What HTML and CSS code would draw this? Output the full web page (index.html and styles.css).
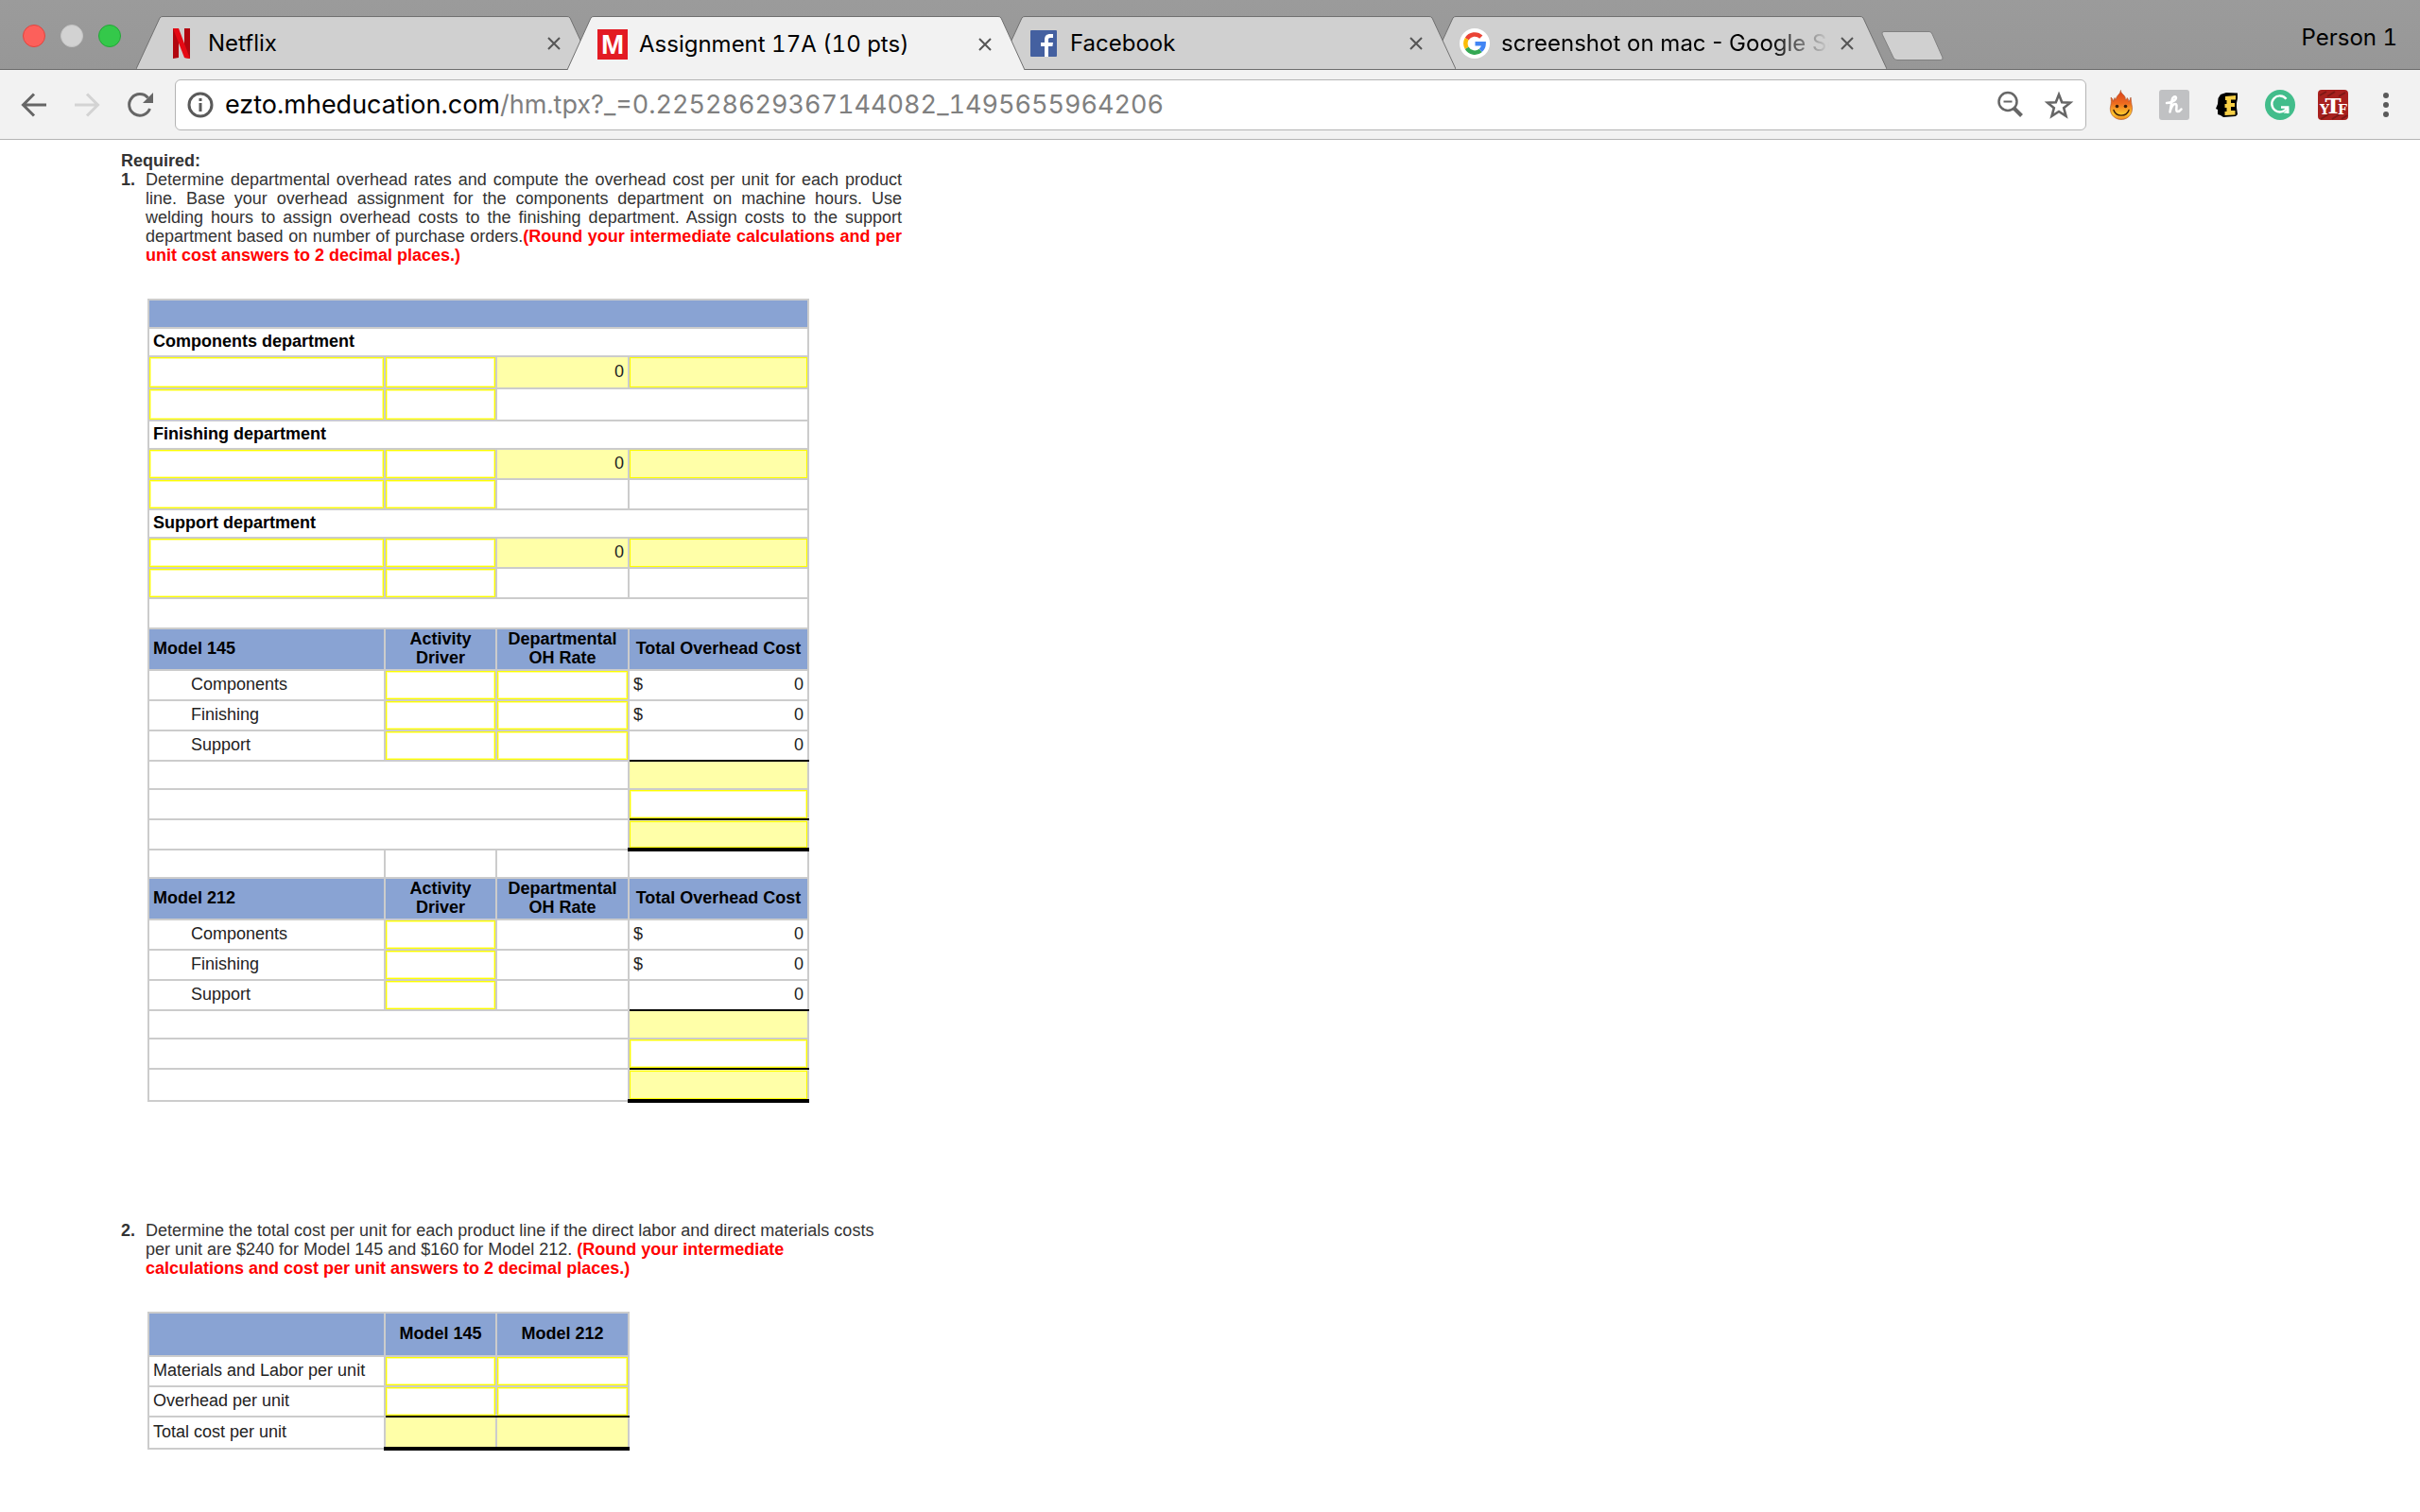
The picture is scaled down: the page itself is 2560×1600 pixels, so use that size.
FILE: index.html
```html
<!DOCTYPE html>
<html lang="en">

<head>
    <meta charset="UTF-8">
    <meta name="viewport" content="width=device-width, initial-scale=1.0">
    <title>Assignment 17A (10 pts)</title>
    <link rel="stylesheet" href="styles.css">
</head>

<body>

    <header class="browser">
        <div class="tab-strip">
            <div class="window-buttons">
                <button class="light red" aria-label="Close window"></button>
                <button class="light grey" aria-label="Minimize window"></button>
                <button class="light green" aria-label="Zoom window"></button>
            </div>
            <nav class="tabs">
                <div class="tab tab-1">
                    <svg class="tab-shape" viewBox="0 0 484 57" preserveAspectRatio="none">
                        <path d="M0 57L25 2Q26 .5 28 .5H456Q458 .5 459 2L484 57" />
                    </svg>
                    <svg class="favicon" viewBox="0 0 32 32">
                        <path fill="#b1060f" d="M7 0h6v31l-6 1zM19 0h6v32l-6-1z" />
                        <path fill="#e50914" d="M7 0h6l12 32-6-1z" />
                    </svg>
                    <a class="tab-title" href="#">Netflix</a>
                    <button class="tab-close" aria-label="Close tab"><svg viewBox="0 0 14 14"><path d="M1 1l12 12M13 1L1 13" /></svg></button>
                </div>
                <div class="tab tab-2 active">
                    <svg class="tab-shape" viewBox="0 0 484 57" preserveAspectRatio="none">
                        <path d="M0 57L25 2Q26 .5 28 .5H456Q458 .5 459 2L484 57" />
                    </svg>
                    <svg class="favicon" viewBox="0 0 32 32">
                        <rect width="32" height="32" fill="#e31b23" />
                        <text class="logo-m" x="16" y="26" text-anchor="middle">M</text>
                    </svg>
                    <a class="tab-title" href="#">Assignment 17A (10 pts)</a>
                    <button class="tab-close" aria-label="Close tab"><svg viewBox="0 0 14 14"><path d="M1 1l12 12M13 1L1 13" /></svg></button>
                </div>
                <div class="tab tab-3">
                    <svg class="tab-shape" viewBox="0 0 484 57" preserveAspectRatio="none">
                        <path d="M0 57L25 2Q26 .5 28 .5H456Q458 .5 459 2L484 57" />
                    </svg>
                    <svg class="favicon" viewBox="0 0 32 32">
                        <rect x="2" y="2" width="28" height="28" rx="1" fill="#4460a0" />
                        <path fill="#fff" d="M17 30V19h-4v-4h4v-3c0-4 2-6 6-6h3v4h-3c-1.500 0-2 .7-2 2v3h5l-.6 4H21v11z" />
                    </svg>
                    <a class="tab-title" href="#">Facebook</a>
                    <button class="tab-close" aria-label="Close tab"><svg viewBox="0 0 14 14"><path d="M1 1l12 12M13 1L1 13" /></svg></button>
                </div>
                <div class="tab tab-4">
                    <svg class="tab-shape" viewBox="0 0 484 57" preserveAspectRatio="none">
                        <path d="M0 57L25 2Q26 .5 28 .5H456Q458 .5 459 2L484 57" />
                    </svg>
                    <svg class="favicon" viewBox="0 0 32 32">
                        <circle cx="16" cy="16" r="16" fill="#fff" />
                        <g fill="none" stroke-width="4.500">
                            <path stroke="#ea4335" d="M7.700 11.200A9.600 9.600 0 0 1 22.800 9.200" />
                            <path stroke="#fbbc05" d="M7.700 20.800A9.600 9.600 0 0 1 7.700 11.200" />
                            <path stroke="#34a853" d="M22.200 23.400A9.600 9.600 0 0 1 7.700 20.800" />
                            <path stroke="#4285f4" d="M16.500 16.200H25.600A9.600 9.600 0 0 1 22.200 23.400" />
                        </g>
                    </svg>
                    <a class="tab-title fade" href="#">screenshot on mac - Google Search</a>
                    <button class="tab-close" aria-label="Close tab"><svg viewBox="0 0 14 14"><path d="M1 1l12 12M13 1L1 13" /></svg></button>
                </div>
            </nav>
            <button class="new-tab" aria-label="New tab">
                <svg viewBox="0 0 66 32">
                    <path d="M3 .5H51Q53 .5 54 3L65 28Q65.500 30.500 63 30.500H17Q14 30.500 13 28L1 3Q.5 .5 3 .5z" />
                </svg>
            </button>
            <button class="profile">Person 1</button>
        </div>

        <div class="toolbar">
            <button class="tool" aria-label="Back">
                <svg viewBox="0 0 32 32"><path class="line" d="M29 16H5M16 4.500L4.500 16L16 27.500" /></svg>
            </button>
            <button class="tool disabled" aria-label="Forward">
                <svg viewBox="0 0 32 32"><path class="line" d="M3 16H27M16 4.500L27.500 16L16 27.500" /></svg>
            </button>
            <button class="tool" aria-label="Reload">
                <svg viewBox="0 0 32 32">
                    <path class="line" d="M26.500 20A11.300 11.300 0 1 1 24.500 8.500" />
                    <path fill="#666" d="M30 3v11H19z" />
                </svg>
            </button>
            <div class="omnibox">
                <svg class="info" viewBox="0 0 28 28">
                    <circle cx="14" cy="14" r="12" fill="none" stroke="#5a5a5a" stroke-width="3" />
                    <path fill="#5a5a5a" d="M12.500 7h3v3h-3zM12.500 12h3v9h-3z" />
                </svg>
                <a class="url" href="#">ezto.mheducation.com<span>/hm.tpx?_=0.22528629367144082_1495655964206</span></a>
                <button class="omni-button" aria-label="Zoom">
                    <svg viewBox="0 0 32 32">
                        <circle cx="14" cy="12.500" r="9.500" fill="none" stroke="#666" stroke-width="2.500" />
                        <path fill="none" stroke="#666" stroke-width="2" d="M9.500 12.500h9" />
                        <path fill="none" stroke="#666" stroke-width="4" d="M20.500 19.500l8 8" />
                    </svg>
                </button>
                <button class="omni-button" aria-label="Bookmark this page">
                    <svg viewBox="0 0 32 32">
                        <path fill="none" stroke="#666" stroke-width="2.600" d="M16 5l3.200 8.200 8.800.5-6.800 5.600 2.300 8.500L16 23l-7.500 4.800 2.300-8.500L4 13.700l8.800-.5z" />
                    </svg>
                </button>
            </div>
            <button class="tool" aria-label="Hola">
                <svg viewBox="0 0 32 32">
                    <defs>
                        <linearGradient id="flame" x1="0" y1="0" x2="0" y2="1">
                            <stop offset="0" stop-color="#d8401c" />
                            <stop offset=".45" stop-color="#ee6b1f" />
                            <stop offset=".8" stop-color="#fdc52c" />
                            <stop offset="1" stop-color="#f08a20" />
                        </linearGradient>
                    </defs>
                    <path fill="url(#flame)" stroke="#a8502a" stroke-width=".6" d="M15.500.5c-.3 2 1 3 3 5 1.500 1.500 2 3 1.800 5 1 0 1.700-.7 2-2 1.200 1.700 1.500 2.500 1.300 4 1.300-1 1.800-2.500 2.400-4.500.7 3 .2 5 1 7.500 2.500 8.500-3 16-11 16s-13.500-7-11.200-15C5.500 13.500 5.500 12 5 8c1.500 1 2 2.500 2.700 4.500.2-1.500.3-2.500 1.300-4 .5 1 .7 1.500 1.300 2C10.500 6 15 5 15.500.5z" />
                    <circle cx="11.500" cy="17.500" r="1.800" fill="#3a1d08" />
                    <circle cx="20.500" cy="17.500" r="1.800" fill="#3a1d08" />
                    <path fill="none" stroke="#3a1d08" stroke-width="1.400" stroke-linecap="round" d="M8 21.500c2 7.500 14 7.500 16 0" />
                </svg>
            </button>
            <button class="tool" aria-label="Honey">
                <svg viewBox="0 0 32 32">
                    <rect width="32" height="32" rx="3" fill="#c0c1c3" />
                    <path fill="none" stroke="#fff" stroke-width="2.500" stroke-linecap="round" stroke-linejoin="round" d="M8 14c5 0 10-3 10-5.500C18 6 14 7 13.500 12L11.500 23.500C13 18 15 15 17 15c3.500 0-.5 8 2.500 8 2 0 3-1 4-2.500" />
                </svg>
            </button>
            <button class="tool" aria-label="Ebates">
                <svg viewBox="0 0 32 32">
                    <path d="M9 5l6-2 12 .5V9l-1 5v5l1 7-2 2-13 1-3-2-3-1V21l-2-1 2-5 .5-6z" />
                    <path fill="#f7cf46" d="M14 7l11-1v4.500h-5v3.500h4v4h-4v4h4.500v4.500l-11 .5V23h2v-4h-2v-4h2v-4h-1.500z" />
                </svg>
            </button>
            <button class="tool" aria-label="Grammarly">
                <svg viewBox="0 0 32 32">
                    <circle cx="16" cy="16" r="16" fill="#42bd8b" />
                    <path fill="none" stroke="#fff" stroke-width="2.400" d="M22.500 9.700A8.500 8.500 0 1 0 23.500 18.500M17 18.500h7.200V25" />
                    <path fill="#fff" d="M19.500 24.800l5.700-5v5z" />
                </svg>
            </button>
            <button class="tool" aria-label="YTF">
                <svg viewBox="0 0 32 32">
                    <rect width="32" height="32" rx="4" fill="#a8201e" />
                    <path fill="none" stroke="#7d1815" stroke-width="2" d="M2 6l7-4M10 7l8-5M22 7l7-4M3 31l8-5M15 31l8-5M25 31l6-4" />
                    <text class="logo-ytf" x="7" y="26" text-anchor="middle">Y</text>
                    <text class="logo-ytf big" x="16" y="25" text-anchor="middle">T</text>
                    <text class="logo-ytf" x="26" y="26" text-anchor="middle">F</text>
                </svg>
            </button>
            <button class="tool" aria-label="Menu">
                <svg viewBox="0 0 32 32" fill="#5a5a5a">
                    <circle cx="16" cy="6" r="3" />
                    <circle cx="16" cy="16" r="3" />
                    <circle cx="16" cy="26" r="3" />
                </svg>
            </button>
        </div>
    </header>

    <main class="page">
        <h1 class="required">Required:</h1>
        <div class="question">
            <b class="number">1.</b>
            <p class="justified">Determine departmental overhead rates and compute the overhead cost per unit for each product line. Base your overhead assignment for the components department on machine hours. Use welding hours to assign overhead costs to the finishing department. Assign costs to the support department based on number of purchase orders.<b class="hint">(Round your intermediate calculations and per unit cost answers to 2 decimal places.)</b></p>
        </div>

        <table class="sheet sheet-overhead">
            <colgroup>
                <col class="col-label">
                <col class="col-driver">
                <col class="col-rate">
                <col class="col-total">
            </colgroup>
            <tbody>
                <tr class="row-short blue"><td colspan="4"></td></tr>

                <tr class="row-short"><th colspan="4">Components department</th></tr>
                <tr class="row-tall">
                    <td><input type="text" aria-label="Components cost"></td>
                    <td><input type="text" aria-label="Components cost amount"></td>
                    <td class="yellow num">0</td>
                    <td><input type="text" class="result" aria-label="Components rate unit" readonly></td>
                </tr>
                <tr class="row-tall">
                    <td><input type="text" aria-label="Components driver"></td>
                    <td><input type="text" aria-label="Components driver amount"></td>
                    <td colspan="2"></td>
                </tr>

                <tr class="row-short"><th colspan="4">Finishing department</th></tr>
                <tr>
                    <td><input type="text" aria-label="Finishing cost"></td>
                    <td><input type="text" aria-label="Finishing cost amount"></td>
                    <td class="yellow num">0</td>
                    <td><input type="text" class="result" aria-label="Finishing rate unit" readonly></td>
                </tr>
                <tr>
                    <td><input type="text" aria-label="Finishing driver"></td>
                    <td><input type="text" aria-label="Finishing driver amount"></td>
                    <td></td>
                    <td></td>
                </tr>

                <tr class="row-short"><th colspan="4">Support department</th></tr>
                <tr>
                    <td><input type="text" aria-label="Support cost"></td>
                    <td><input type="text" aria-label="Support cost amount"></td>
                    <td class="yellow num">0</td>
                    <td><input type="text" class="result" aria-label="Support rate unit" readonly></td>
                </tr>
                <tr>
                    <td><input type="text" aria-label="Support driver"></td>
                    <td><input type="text" aria-label="Support driver amount"></td>
                    <td></td>
                    <td></td>
                </tr>
                <tr><td colspan="4"></td></tr>

                <!-- Model 145 -->
                <tr class="row-head blue">
                    <th>Model 145</th>
                    <th class="center">Activity Driver</th>
                    <th class="center">Departmental OH Rate</th>
                    <th class="center">Total Overhead Cost</th>
                </tr>
                <tr>
                    <td class="indent">Components</td>
                    <td><input type="text" aria-label="Model 145 components driver"></td>
                    <td><input type="text" aria-label="Model 145 components rate"></td>
                    <td><div class="money"><span>$</span><span>0</span></div></td>
                </tr>
                <tr>
                    <td class="indent">Finishing</td>
                    <td><input type="text" aria-label="Model 145 finishing driver"></td>
                    <td><input type="text" aria-label="Model 145 finishing rate"></td>
                    <td><div class="money"><span>$</span><span>0</span></div></td>
                </tr>
                <tr>
                    <td class="indent">Support</td>
                    <td><input type="text" aria-label="Model 145 support driver"></td>
                    <td><input type="text" aria-label="Model 145 support rate"></td>
                    <td class="num line-below">0</td>
                </tr>
                <tr class="row-short">
                    <td colspan="3"></td>
                    <td class="yellow"></td>
                </tr>
                <tr>
                    <td colspan="3"></td>
                    <td class="line-below"><input type="text" aria-label="Model 145 units"></td>
                </tr>
                <tr>
                    <td colspan="3"></td>
                    <td class="double-below yellow"><input type="text" class="result" aria-label="Model 145 overhead per unit" readonly></td>
                </tr>
                <tr class="row-short"><td></td><td></td><td></td><td></td></tr>

                <!-- Model 212 -->
                <tr class="row-head blue">
                    <th>Model 212</th>
                    <th class="center">Activity Driver</th>
                    <th class="center">Departmental OH Rate</th>
                    <th class="center">Total Overhead Cost</th>
                </tr>
                <tr>
                    <td class="indent">Components</td>
                    <td><input type="text" aria-label="Model 212 components driver"></td>
                    <td></td>
                    <td><div class="money"><span>$</span><span>0</span></div></td>
                </tr>
                <tr>
                    <td class="indent">Finishing</td>
                    <td><input type="text" aria-label="Model 212 finishing driver"></td>
                    <td></td>
                    <td><div class="money"><span>$</span><span>0</span></div></td>
                </tr>
                <tr>
                    <td class="indent">Support</td>
                    <td><input type="text" aria-label="Model 212 support driver"></td>
                    <td></td>
                    <td class="num line-below">0</td>
                </tr>
                <tr class="row-short">
                    <td colspan="3"></td>
                    <td class="yellow"></td>
                </tr>
                <tr>
                    <td colspan="3"></td>
                    <td class="line-below"><input type="text" aria-label="Model 212 units"></td>
                </tr>
                <tr class="row-tall">
                    <td colspan="3"></td>
                    <td class="double-below yellow"><input type="text" class="result" aria-label="Model 212 overhead per unit" readonly></td>
                </tr>
            </tbody>
        </table>

        <div class="question second">
            <b class="number">2.</b>
            <p>Determine the total cost per unit for each product line if the direct labor and direct materials costs per unit are $240 for Model 145 and $160 for Model 212. <b class="hint">(Round your intermediate calculations and cost per unit answers to 2 decimal places.)</b></p>
        </div>

        <table class="sheet sheet-cost">
            <colgroup>
                <col class="col-label">
                <col class="col-driver">
                <col class="col-rate">
            </colgroup>
            <thead>
                <tr class="row-head blue">
                    <td></td>
                    <th class="center">Model 145</th>
                    <th class="center">Model 212</th>
                </tr>
            </thead>
            <tbody>
                <tr>
                    <td>Materials and Labor per unit</td>
                    <td><input type="text" aria-label="Model 145 materials and labor"></td>
                    <td><input type="text" aria-label="Model 212 materials and labor"></td>
                </tr>
                <tr>
                    <td>Overhead per unit</td>
                    <td class="line-below"><input type="text" aria-label="Model 145 overhead"></td>
                    <td class="line-below"><input type="text" aria-label="Model 212 overhead"></td>
                </tr>
                <tr class="row-tall">
                    <td>Total cost per unit</td>
                    <td class="double-below yellow"></td>
                    <td class="double-below yellow"></td>
                </tr>
            </tbody>
        </table>
    </main>

</body>

</html>
```

FILE: styles.css
```css
* {
    box-sizing: border-box;
}

body {
    margin: 0;
    background: #fff;
    color: #333;
    font-family: "Liberation Sans", Arial, sans-serif;
    font-size: 18px;
    line-height: 20px;
}

button {
    padding: 0;
    border: none;
    background: none;
    color: inherit;
    font: inherit;
}

svg {
    display: block;
}

a {
    color: inherit;
    text-decoration: none;
}

/* Browser window */
.browser {
    font-family: Inter, Roboto, sans-serif;
    font-variant-numeric: tabular-nums;
    color: #000;
}

.tab-strip {
    display: flex;
    align-items: flex-end;
    height: 74px;
    padding: 0 24px;
    background: linear-gradient(#9b9b9b, #979797);
    box-shadow: inset 0 -1px #6b6b6b;
}

.window-buttons {
    display: flex;
    gap: 16px;
    padding-bottom: 24px;
    margin-right: 16px;
}

.light {
    width: 24px;
    height: 24px;
    border-radius: 50%;
    border: 1px solid #c4c4c4;
    background: #d2d2d2;
}

.light.red {
    background: #fc605b;
    border-color: #e0443e;
}

.light.green {
    background: #34c84a;
    border-color: #24a638;
}

.tabs {
    display: flex;
}

.tab {
    position: relative;
    display: flex;
    align-items: center;
    width: 484px;
    height: 57px;
    padding: 2px 35px 0 32px;
    margin-right: -28px;
    font-size: 24px;
    line-height: 32px;
}

.tab-shape {
    position: absolute;
    left: 0;
    top: 0;
    width: 100%;
    height: 100%;
    fill: #d0d0d0;
    stroke: #6f6f6f;
}

.tab:not(.active) {
    height: 56px;
    margin-bottom: 1px;
}

.tab-1 {
    z-index: 3;
}

.tab-2 {
    z-index: 4;
}

.tab-3 {
    z-index: 2;
}

.tab-4 {
    z-index: 1;
}

.active .tab-shape {
    fill: #f2f2f2;
}

.favicon {
    position: relative;
    width: 32px;
    height: 32px;
    margin-right: 12px;
}

.logo-m {
    fill: #fff;
    font: bold 29px "Liberation Sans", Arial, sans-serif;
}

.tab-title {
    position: relative;
    flex: 1;
    overflow: hidden;
    white-space: nowrap;
}

.tab-title.fade {
    font-variant-numeric: normal;
    -webkit-mask-image: linear-gradient(to right, #000 82%, transparent);
    mask-image: linear-gradient(to right, #000 82%, transparent);
}

.tab-close {
    position: relative;
    width: 14px;
    margin-left: 12px;
}

.tab-close path {
    fill: none;
    stroke: #555;
    stroke-width: 2;
}

.new-tab {
    width: 66px;
    margin: 0 0 9px 22px;
}

.new-tab path {
    fill: #d0d0d0;
    stroke: #808080;
}

.profile {
    margin: 0 0 18px auto;
    font-size: 24px;
    line-height: 32px;
}

.toolbar {
    display: flex;
    align-items: center;
    gap: 24px;
    height: 74px;
    padding: 0 20px;
    background: #f2f2f2;
    border-bottom: 1px solid #b4b4b4;
}

.tool {
    flex: none;
    width: 32px;
    height: 32px;
}

.line {
    fill: none;
    stroke: #666;
    stroke-width: 3;
}

.disabled .line {
    stroke: #d3d3d3;
}

.omnibox {
    flex: 1;
    display: flex;
    align-items: center;
    height: 54px;
    margin: 0 -3px;
    padding: 0 12px;
    border: 1px solid #b4b4b4;
    border-radius: 6px;
    background: #fff;
}

.info {
    width: 28px;
    height: 28px;
    margin-right: 12px;
}

.url {
    flex: 1;
    font-size: 27px;
    line-height: 36px;
}

.url span {
    color: #808080;
}

.omni-button {
    width: 32px;
    height: 32px;
    margin-left: 20px;
}

.logo-ytf {
    fill: #fff;
    font: bold 14px "DejaVu Serif", serif;
}

.logo-ytf.big {
    font-size: 23px;
}

/* Assignment */
.page {
    padding: 12px 128px 60px;
}

.required {
    margin: 0;
    font-size: 18px;
}

.question {
    display: flex;
}

.question.second {
    margin-top: 125px;
}

.number {
    width: 26px;
}

.question p {
    max-width: 780px;
    margin: 0;
}

.question p.justified {
    max-width: 800px;
    text-align: justify;
}

.hint {
    color: #f00;
}

.sheet {
    margin: 36px 0 0 28px;
    border-collapse: collapse;
    table-layout: fixed;
    color: #222;
}

.sheet-overhead {
    width: 700px;
}

.sheet-cost {
    width: 510px;
}

.col-label {
    width: 250px;
}

.col-driver {
    width: 118px;
}

.col-rate {
    width: 140px;
}

.col-total {
    width: 190px;
}

.sheet tr {
    height: 32px;
}

.sheet .row-short {
    height: 30px;
}

.sheet .row-tall {
    height: 34px;
}

.sheet .row-head {
    height: 44px;
}

.sheet-cost .row-head {
    height: 46px;
}

.sheet th,
.sheet td {
    padding: 0 4px 2px;
    border: 2px solid #ccc;
    text-align: left;
}

.sheet th {
    color: #000;
}

.blue {
    background: #89a3d3;
}

.sheet .center {
    text-align: center;
}

.sheet .num {
    text-align: right;
}

.sheet .indent {
    padding-left: 44px;
}

.yellow {
    background: #ffffa8;
}

.sheet td:has(input) {
    padding: 0;
}

.sheet input {
    display: block;
    width: 100%;
    height: 30px;
    padding: 0 4px;
    border: 1px solid #ff0;
    box-shadow: inset 0 0 0 1px #ffff99;
    background: #fff;
    font: inherit;
    text-align: right;
}

.sheet .row-tall input {
    height: 32px;
}

.sheet input.result {
    background: #ffffa8;
}

.sheet .line-below {
    border-bottom-color: #000;
}

.sheet .double-below {
    border-bottom: 4px solid #000;
}

.sheet .double-below input {
    height: 28px;
}

.sheet .row-tall .double-below input {
    height: 30px;
}

.money {
    display: flex;
    justify-content: space-between;
}
```
